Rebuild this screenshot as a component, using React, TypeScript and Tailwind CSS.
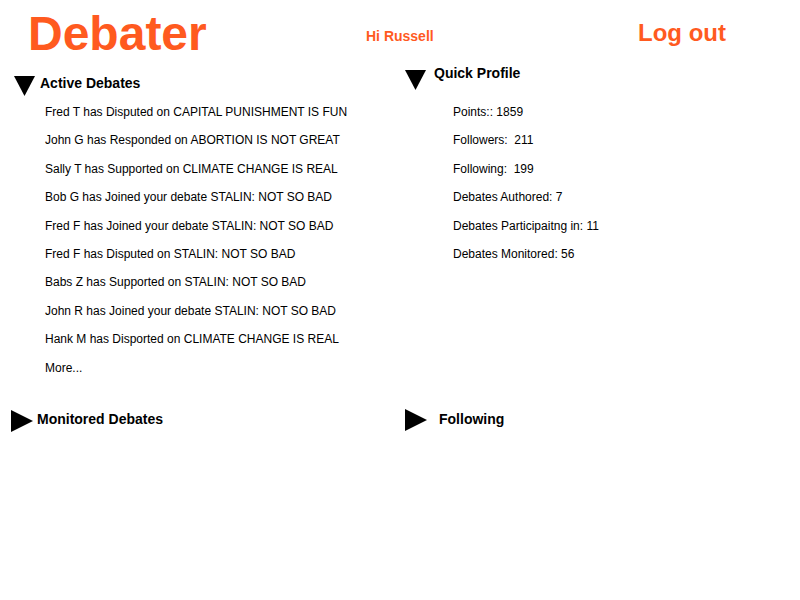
const activity = [
  "Fred T has Disputed on CAPITAL PUNISHMENT IS FUN",
  "John G has Responded on ABORTION IS NOT GREAT",
  "Sally T has Supported on CLIMATE CHANGE IS REAL",
  "Bob G has Joined your debate STALIN: NOT SO BAD",
  "Fred F has Joined your debate STALIN: NOT SO BAD",
  "Fred F has Disputed on STALIN: NOT SO BAD",
  "Babs Z has Supported on STALIN: NOT SO BAD",
  "John R has Joined your debate STALIN: NOT SO BAD",
  "Hank M has Disported on CLIMATE CHANGE IS REAL",
  "More...",
];

const profile = [
  "Points:: 1859",
  "Followers:  211",
  "Following:  199",
  "Debates Authored: 7",
  "Debates Participaitng in: 11",
  "Debates Monitored: 56",
];

function Down() {
  return (
    <svg width="21" height="20" viewBox="0 0 21 20" className="shrink-0">
      <polygon points="0,0 21,0 10.5,20" fill="#000" />
    </svg>
  );
}

function Right() {
  return (
    <svg width="22" height="22" viewBox="0 0 22 22" className="shrink-0">
      <polygon points="0,0 22,11 0,22" fill="#000" />
    </svg>
  );
}

export default function App() {
  return (
    <div
      className="w-[800px] h-[600px] bg-white text-black"
      style={{ fontFamily: '"Liberation Sans", Arial, sans-serif' }}
    >
      <header className="flex items-start h-[64px]">
        <h1 className="ml-[28px] mt-[10px] w-[338px] text-[48px] leading-none font-bold text-[#ff5a1f]">
          Debater
        </h1>
        <span className="mt-[29px] w-[272px] text-[14px] leading-none font-bold text-[#ff5a1f]">
          Hi Russell
        </span>
        <span className="mt-[21px] text-[24px] leading-none font-bold text-[#ff5a1f]">
          Log out
        </span>
      </header>

      <div className="grid grid-cols-2">
        <section>
          <div className="flex items-start mt-[12px]">
            <div className="ml-[14px]">
              <Down />
            </div>
            <h2 className="ml-[5px] text-[14px] leading-none font-bold">
              Active Debates
            </h2>
          </div>
          <ul className="mt-[2px] pl-[45px] text-[12px] leading-[28.4px]">
            {activity.map((item) => (
              <li key={item}>{item}</li>
            ))}
          </ul>
          <div className="flex items-start mt-[28px]">
            <div className="ml-[11px]">
              <Right />
            </div>
            <h2 className="ml-[4px] mt-[2px] text-[14px] leading-none font-bold">
              Monitored Debates
            </h2>
          </div>
        </section>

        <section>
          <div className="flex items-start mt-[2px]">
            <div className="ml-[5px] mt-[4px]">
              <Down />
            </div>
            <h2 className="ml-[8px] text-[14px] leading-none font-bold">
              Quick Profile
            </h2>
          </div>
          <ul className="mt-[8px] pl-[53px] text-[12px] leading-[28.4px]">
            {profile.map((item) => (
              <li key={item} className="whitespace-pre">
                {item}
              </li>
            ))}
          </ul>
          <div className="flex items-start mt-[141px]">
            <div className="ml-[5px]">
              <Right />
            </div>
            <h2 className="ml-[12px] mt-[3px] text-[14px] leading-none font-bold">
              Following
            </h2>
          </div>
        </section>
      </div>
    </div>
  );
}
